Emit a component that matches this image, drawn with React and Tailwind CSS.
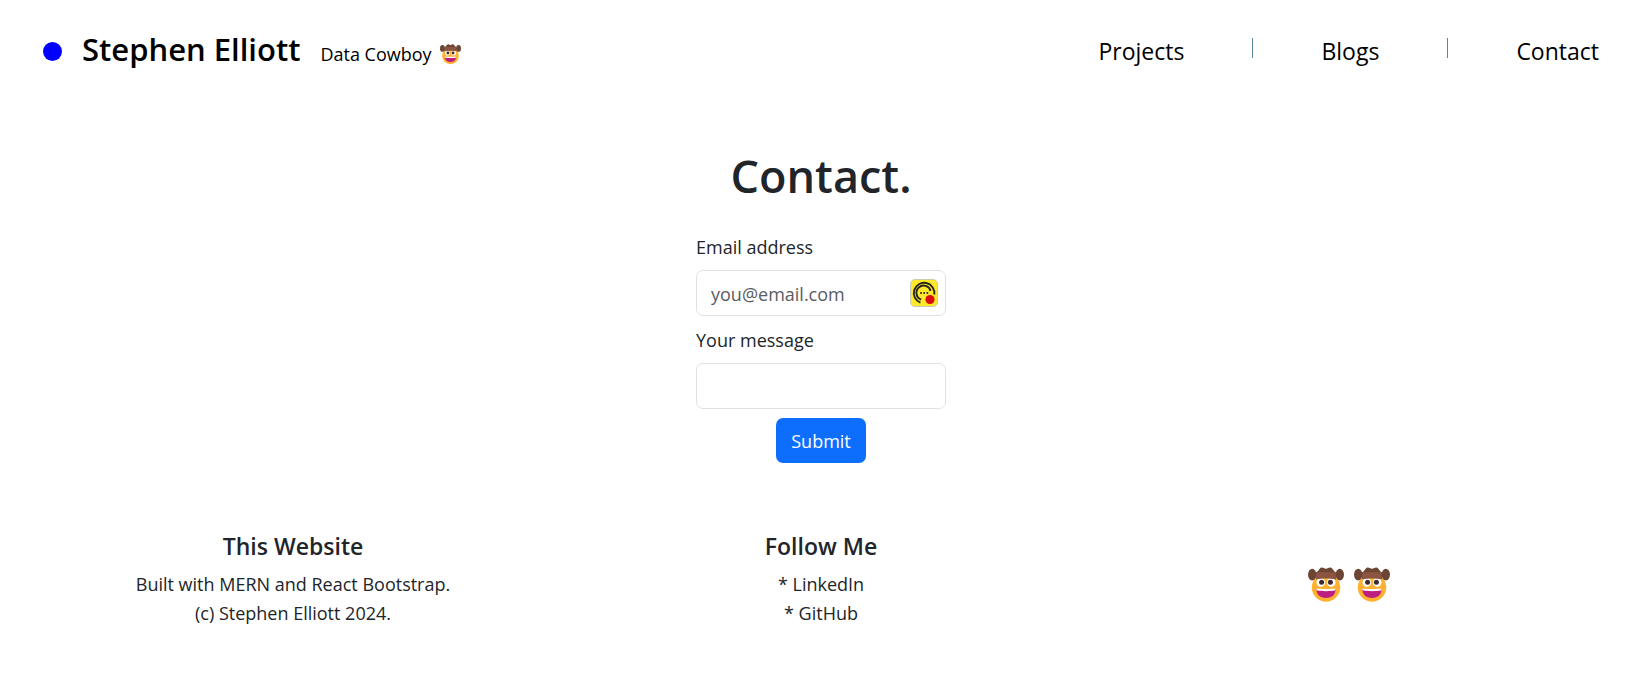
function Cowboy({ className }) {
  return (
    <svg viewBox="0 0 36 36" className={className} role="img" aria-label="cowboy hat face">
      <circle cx="18" cy="20.5" r="14.2" fill="#ffb02e" />
      <circle cx="12.800" cy="15.400" r="4.300" fill="#fff" />
      <circle cx="23.200" cy="15.400" r="4.300" fill="#fff" />
      <circle cx="13.600" cy="15.300" r="2.500" fill="#402a32" />
      <circle cx="22.400" cy="15.300" r="2.500" fill="#402a32" />
      <path d="M8.400 21.600c3 1.200 16.200 1.200 19.200 0 .3 5.800-3.600 9.400-9.600 9.400s-9.900-3.600-9.600-9.400z" fill="#bb1d80" />
      <path d="M8.400 21.600c3 .6 16.200.6 19.200 0 0 1-.1 1.700-.9 2-4 .7-13.400.7-17.400 0-.8-.3-.9-1-.9-2z" fill="#fff" />
      <path d="M8 12V5.500C9.500 4.800 11 3 11.800 1.600c.6-1.300 2.800-1.600 4-.5 1.200 1 3.200 1 4.400 0 1.200-1.100 3.400-.8 4 .5C25 3 26.500 4.800 28 5.500V12c-5.500-1-14.500-1-20 0z" fill="#6d4534" />
      <path d="M8 5.600c6-.6 14-.6 20 0v6.900c-5.500-1.700-14.500-1.700-20 0z" fill="#8b5542" />
      <ellipse cx="4.200" cy="7.600" rx="4.200" ry="5.800" fill="#6d4534" />
      <ellipse cx="31.800" cy="7.600" rx="4.200" ry="5.800" fill="#6d4534" />
    </svg>
  );
}

function ExtensionBadge() {
  return (
    <svg viewBox="0 0 28 28" className="h-7 w-7" aria-hidden="true">
      <rect x=".5" y=".5" width="27" height="27" rx="4.500" fill="#ffe929" stroke="#c9c9b4" />
      <g fill="none" stroke="#26261c" strokeWidth="1.900">
        <path d="M10.400 23.700A10.300 10.300 0 1 1 24.300 15.500" />
        <path d="M11.200 20.600A7.200 7.200 0 1 1 20.600 12" />
      </g>
      <g fill="#26261c">
        <circle cx="11" cy="14" r="1" />
        <circle cx="14.200" cy="14" r="1" />
        <circle cx="17.400" cy="14" r="1" />
      </g>
      <circle cx="20" cy="20.500" r="4.600" fill="#d90d0d" />
    </svg>
  );
}

const field =
  "block h-[46px] w-full rounded-[7px] border border-[#dee2e6] bg-white px-3.5 pt-0.5 text-[18px] text-[#212529] placeholder:text-[#595c5f]";

export default function App() {
  return (
    <div className="pr-2 font-['Open_Sans','Noto_Sans',sans-serif] text-[18px] leading-[29px] text-[#212529]">
      <header className="flex items-center justify-between px-[43px] pt-[27px]">
        <div className="flex items-baseline gap-5 text-black">
          <span className="h-[19px] w-[19px] rounded-full bg-[#0000ff]" />
          <a href="#home" className="text-[31px] font-semibold leading-[44px]">
            Stephen Elliott
          </a>
          <span className="flex items-center gap-2">
            Data Cowboy
            <Cowboy className="h-[21px] w-[21px]" />
          </span>
        </div>
        <nav className="flex items-start gap-[68px] pt-1 text-[23px] leading-[34px] text-black">
          <a href="#projects">Projects</a>
          <span className="mt-1 h-5 w-px bg-[#5b86a0]" />
          <a href="#blogs">Blogs</a>
          <span className="mt-1 h-5 w-px bg-[#5b86a0]" />
          <a href="#contact">Contact</a>
        </nav>
      </header>

      <main className="flex flex-col items-center pt-[72px]">
        <h1 className="text-[45px] font-semibold leading-[66px]">Contact.</h1>
        <form className="flex w-[250px] flex-col items-center pt-6">
          <label htmlFor="email" className="mb-2 w-full">
            Email address
          </label>
          <div className="relative w-full">
            <input id="email" type="email" placeholder="you@email.com" className={field} />
            <span className="absolute right-2 top-[9px]">
              <ExtensionBadge />
            </span>
          </div>
          <label htmlFor="message" className="mb-2 mt-2.5 w-full">
            Your message
          </label>
          <input id="message" type="text" className={field} />
          <button type="submit" className="mt-[9px] h-[45px] rounded-[7px] bg-[#0d6efd] px-[15px] pt-0.5 text-white">
            Submit
          </button>
        </form>
      </main>

      <footer className="grid grid-cols-3 px-[29px] pt-[69px] text-center">
        <section>
          <h2 className="mb-[9px] text-[23px] font-semibold">This Website</h2>
          <p>Built with MERN and React Bootstrap.</p>
          <p>(c) Stephen Elliott 2024.</p>
        </section>
        <section>
          <h2 className="mb-[9px] text-[23px] font-semibold">Follow Me</h2>
          <p>
            * <a href="#linkedin">LinkedIn</a>
          </p>
          <p>
            * <a href="#github">GitHub</a>
          </p>
        </section>
        <div className="flex items-center justify-center gap-2.5 pt-2.5">
          <Cowboy className="h-9 w-9" />
          <Cowboy className="h-9 w-9" />
        </div>
      </footer>
    </div>
  );
}
